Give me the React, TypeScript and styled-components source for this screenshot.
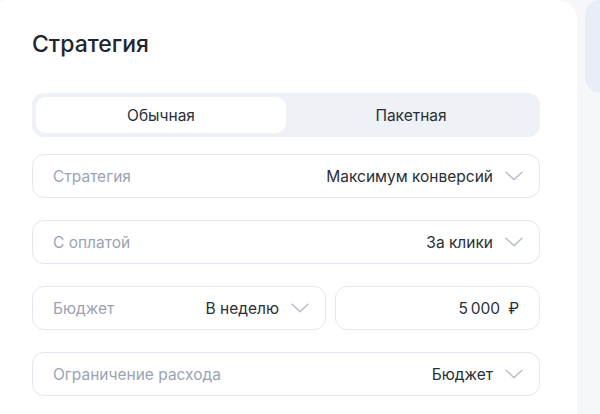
import styled, { createGlobalStyle } from "styled-components";

const Global = createGlobalStyle`
  html, body {
    margin: 0;
    padding: 0;
    background: #f5f7fb;
    font-family: Inter, "Noto Sans", sans-serif;
    overflow: hidden;
  }
`;

const Layout = styled.div`
  display: flex;
  align-items: flex-start;
  gap: 8px;
  width: 600px;
  height: 414px;
  overflow: hidden;
`;

const Card = styled.div`
  width: 577px;
  flex-shrink: 0;
  height: 414px;
  background: #fff;
  border-radius: 6px 20px 0 0 / 4px 20px 0 0;
  padding: 30px 37px 0 32px;
  box-sizing: border-box;
`;

const SidePanel = styled.div`
  flex: 1;
  height: 93px;
  background: #e9edf5;
  border-radius: 16px 0 0 16px;
`;

const Title = styled.h2`
  margin: 0 0 35px;
  font-size: 23px;
  line-height: 28px;
  font-weight: 500;
  color: #21252e;
`;

const Tabs = styled.div`
  display: grid;
  grid-template-columns: 1fr 1fr;
  padding: 4px;
  height: 44px;
  box-sizing: border-box;
  background: #eef1f6;
  border-radius: 12px;
  margin-bottom: 17px;
`;

const Tab = styled.div<{ $active?: boolean }>`
  display: flex;
  align-items: center;
  justify-content: center;
  border-radius: 10px;
  font-size: 15.5px;
  color: #2a2e37;
  background: ${(p) => (p.$active ? "#fff" : "transparent")};
`;

const Stack = styled.div`
  display: flex;
  flex-direction: column;
  gap: 22px;
`;

const Row = styled.div`
  display: flex;
  gap: 9px;
`;

const Field = styled.div<{ $width?: string }>`
  display: flex;
  align-items: center;
  height: 44px;
  flex: ${(p) => (p.$width ? `0 0 ${p.$width}` : "1 1 auto")};
  min-width: 0;
  box-sizing: border-box;
  padding: 0 16px 0 20px;
  border: 1px solid #e4e7ef;
  border-radius: 12px;
  font-size: 15.5px;
`;

const Label = styled.span`
  color: #9aa3b4;
  flex: 1;
`;

const Value = styled.span`
  color: #2a2e37;
`;

const Chevron = styled.svg`
  margin-left: 12px;
  flex-shrink: 0;
`;

const Amount = styled.span`
  flex: 1;
  text-align: right;
  color: #2a2e37;
  padding-right: 4px;
`;

const Currency = styled.span`
  margin-left: 8px;
`;

const Arrow = () => (
  <Chevron width="18" height="10" viewBox="0 0 18 10" fill="none">
    <path
      d="M1 1.2L9 8.6L17 1.2"
      stroke="#b9c0cd"
      strokeWidth="1.5"
      strokeLinecap="round"
      strokeLinejoin="round"
    />
  </Chevron>
);

const Select = ({
  label,
  value,
  width,
}: {
  label: string;
  value: string;
  width?: string;
}) => (
  <Field $width={width}>
    <Label>{label}</Label>
    <Value>{value}</Value>
    <Arrow />
  </Field>
);

const App = () => {
  return (
    <>
      <Global />
      <Layout>
        <Card>
          <Title>Стратегия</Title>
          <Tabs>
            <Tab $active>Обычная</Tab>
            <Tab>Пакетная</Tab>
          </Tabs>
          <Stack>
            <Select label="Стратегия" value="Максимум конверсий" />
            <Select label="С оплатой" value="За клики" />
            <Row>
              <Select label="Бюджет" value="В неделю" width="294px" />
              <Field>
                <Amount>
                  5{"\u202F"}000<Currency>₽</Currency>
                </Amount>
              </Field>
            </Row>
            <Select label="Ограничение расхода" value="Бюджет" />
          </Stack>
        </Card>
        <SidePanel />
      </Layout>
    </>
  );
};

export default App;
